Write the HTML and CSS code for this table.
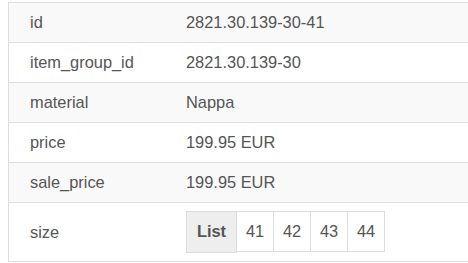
FILE: index.html
```html
<!DOCTYPE html>
<html>
<head>
<meta charset="utf-8">
<link rel="stylesheet" href="styles.css">
</head>
<body>
<div class="table">
  <div class="row striped"><div class="key">id</div><div class="val">2821.30.139-30-41</div></div>
  <div class="row"><div class="key">item_group_id</div><div class="val">2821.30.139-30</div></div>
  <div class="row striped"><div class="key">material</div><div class="val">Nappa</div></div>
  <div class="row"><div class="key">price</div><div class="val">199.95 EUR</div></div>
  <div class="row striped"><div class="key">sale_price</div><div class="val">199.95 EUR</div></div>
  <div class="row"><div class="key">size</div><div class="val">
    <div class="tags">
      <span class="tag tag-head">List</span>
      <span class="tag">41</span>
      <span class="tag">42</span>
      <span class="tag">43</span>
      <span class="tag">44</span>
    </div>
  </div></div>
</div>
</body>
</html>
```
FILE: styles.css
```css
html, body {
  margin: 0;
  padding: 0;
  background: #fff;
}
body {
  font-family: "Liberation Sans", Arial, sans-serif;
  font-size: 16.4px;
  color: #555;
}
.table {
  margin: 2px 0 0 8px;
  border-left: 1px solid #ddd;
  border-top: 1px solid #ddd;
}
.row {
  display: grid;
  grid-template-columns: 168px 1fr;
  align-items: center;
  border-bottom: 1px solid #ddd;
  line-height: 23px;
}
.row.striped {
  background: #f9f9f9;
}
.key {
  padding: 8px 0 8px 21px;
}
.val {
  padding: 8px 0 8px 9px;
}
.tags {
  display: flex;
  align-items: flex-start;
  height: 42px;
}
.tag {
  box-sizing: border-box;
  width: 38px;
  height: 41px;
  line-height: 39px;
  border: 1px solid #ddd;
  text-align: center;
  margin-left: -1px;
  background: #fff;
}
.tag-head {
  width: 51px;
  height: 42px;
  margin-left: 0;
  background: #eee;
  font-weight: bold;
}
```
